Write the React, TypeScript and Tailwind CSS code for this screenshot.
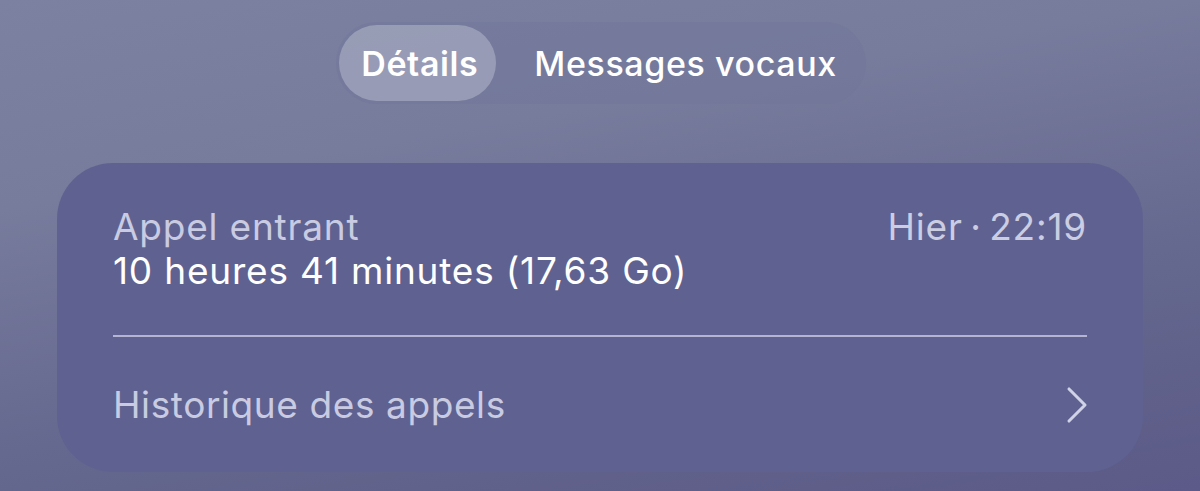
import { ChevronRight } from "lucide-react";

const font = { fontFamily: "Inter, 'Noto Sans', sans-serif" };

export default function App() {
  return (
    <div
      className="w-[1200px] h-[491px] overflow-hidden bg-[linear-gradient(170deg,#7c81a1_0%,#777b9c_30%,#63668d_70%,#5c5a88_100%)] flex flex-col items-center"
      style={font}
    >
      <div className="mt-[22px] ml-[2px] flex items-center h-[82px] rounded-full bg-[#72779b]/50 p-[3px] pr-[29px]">
        <div className="h-full pl-[22px] pr-[18px] rounded-full bg-white/25 flex items-center text-[34px] font-semibold text-white tracking-[0.6px]">
          Détails
        </div>
        <div className="pl-[38px] text-[34px] font-medium text-white tracking-[0.6px]">
          Messages vocaux
        </div>
      </div>

      <div className="mt-[59px] w-[1086px] h-[309px] rounded-[56px] bg-[#5f6290] px-[56px] flex flex-col">
        <div className="pt-[42px] pb-[42px] flex justify-between text-[37px] leading-[44px] tracking-[0.8px]">
          <div>
            <div className="text-[#c9cbe2]">Appel entrant</div>
            <div className="text-white">10 heures 41 minutes (17,63 Go)</div>
          </div>
          <div className="text-[#cbcde3]">Hier{"\u2009·\u2009"}22:19</div>
        </div>
        <div className="h-[2px] bg-[#b3b5d3]" />
        <div className="flex-1 flex items-center justify-between text-[37px] leading-[44px] text-[#c9cbe2] tracking-[0.6px]">
          <span>Historique des appels</span>
          <ChevronRight className="w-[64px] h-[64px] -mr-[22px] text-[#d0d2e8]" strokeWidth={1.15} />
        </div>
      </div>
    </div>
  );
}
